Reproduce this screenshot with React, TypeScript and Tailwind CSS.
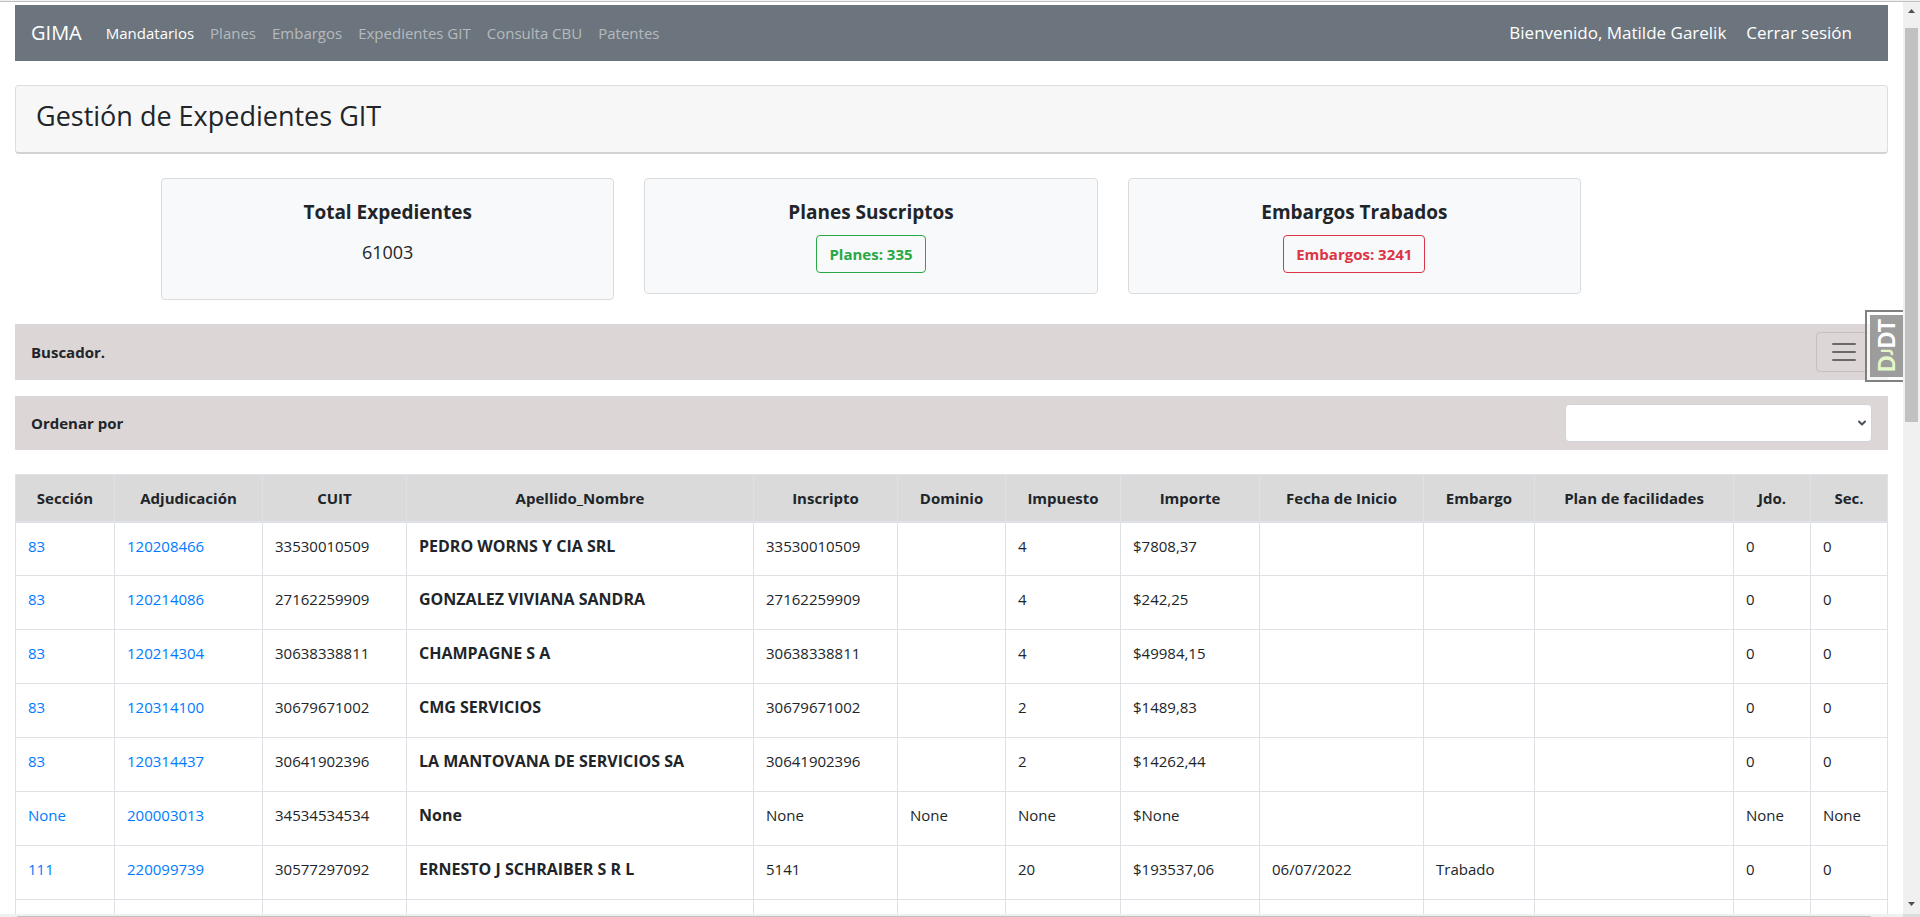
import { ChevronDown } from 'lucide-react'

interface Expediente {
    seccion: string
    adjudicacion: string
    cuit: string
    nombre: string
    inscripto: string
    dominio?: string
    impuesto: string
    importe: string
    fecha?: string
    embargo?: string
    plan?: string
    jdo: string
    sec: string
}

const navLinks = ['Mandatarios', 'Planes', 'Embargos', 'Expedientes GIT', 'Consulta CBU', 'Patentes']

const columns = [
    { label: 'Sección', width: 'w-[99px]' },
    { label: 'Adjudicación', width: 'w-[148px]' },
    { label: 'CUIT', width: 'w-[144px]' },
    { label: 'Apellido_Nombre', width: 'w-[347px]' },
    { label: 'Inscripto', width: 'w-[144px]' },
    { label: 'Dominio', width: 'w-[108px]' },
    { label: 'Impuesto', width: 'w-[115px]' },
    { label: 'Importe', width: 'w-[139px]' },
    { label: 'Fecha de Inicio', width: 'w-[164px]' },
    { label: 'Embargo', width: 'w-[111px]' },
    { label: 'Plan de facilidades', width: 'w-[199px]' },
    { label: 'Jdo.', width: 'w-[77px]' },
    { label: 'Sec.', width: 'w-[77px]' },
]

const expedientes: Expediente[] = [
    { seccion: '83', adjudicacion: '120208466', cuit: '33530010509', nombre: 'PEDRO WORNS Y CIA SRL', inscripto: '33530010509', impuesto: '4', importe: '$7808,37', jdo: '0', sec: '0' },
    { seccion: '83', adjudicacion: '120214086', cuit: '27162259909', nombre: 'GONZALEZ VIVIANA SANDRA', inscripto: '27162259909', impuesto: '4', importe: '$242,25', jdo: '0', sec: '0' },
    { seccion: '83', adjudicacion: '120214304', cuit: '30638338811', nombre: 'CHAMPAGNE S A', inscripto: '30638338811', impuesto: '4', importe: '$49984,15', jdo: '0', sec: '0' },
    { seccion: '83', adjudicacion: '120314100', cuit: '30679671002', nombre: 'CMG SERVICIOS', inscripto: '30679671002', impuesto: '2', importe: '$1489,83', jdo: '0', sec: '0' },
    { seccion: '83', adjudicacion: '120314437', cuit: '30641902396', nombre: 'LA MANTOVANA DE SERVICIOS SA', inscripto: '30641902396', impuesto: '2', importe: '$14262,44', jdo: '0', sec: '0' },
    { seccion: 'None', adjudicacion: '200003013', cuit: '34534534534', nombre: 'None', inscripto: 'None', dominio: 'None', impuesto: 'None', importe: '$None', jdo: 'None', sec: 'None' },
    { seccion: '111', adjudicacion: '220099739', cuit: '30577297092', nombre: 'ERNESTO J SCHRAIBER S R L', inscripto: '5141', impuesto: '20', importe: '$193537,06', fecha: '06/07/2022', embargo: 'Trabado', jdo: '0', sec: '0' },
]

const cell = 'border border-[#dee2e6] px-3 h-[54px] pt-[11px] align-top leading-6'

function Navbar() {
    return (
        <nav className="flex h-14 items-center bg-[#6c757d] px-4">
            <a href="#" className="mr-6 text-[20px] text-white">GIMA</a>
            <ul className="flex gap-4 text-[15px]">
                {navLinks.map((label, i) => (
                    <li key={label}>
                        <a href="#" className={i === 0 ? 'text-white' : 'text-white/50'}>{label}</a>
                    </li>
                ))}
            </ul>
            <div className="ml-auto flex gap-5 pr-5 text-[17px] text-white">
                <span>Bienvenido, Matilde Garelik</span>
                <a href="#">Cerrar sesión</a>
            </div>
        </nav>
    )
}

function Resumen() {
    const card = 'rounded border border-[#d9dbdd] bg-[#f8f9fa] px-5 pt-[21px] text-center'
    return (
        <section className="mt-6 mr-[307px] ml-[146px] grid grid-cols-3 items-start gap-[30px]">
            <div className={`${card} pb-[35px]`}>
                <h2 className="mb-4 text-[19px] leading-6 font-bold">Total Expedientes</h2>
                <p className="text-[18px] leading-6 font-medium">61003</p>
            </div>
            <div className={`${card} pb-5`}>
                <h2 className="mb-[11px] text-[19px] leading-6 font-bold">Planes Suscriptos</h2>
                <button type="button" className="mx-auto block h-[38px] rounded border border-[#28a745] px-3 text-[15px] font-bold text-[#28a745]">Planes: 335</button>
            </div>
            <div className={`${card} pb-5`}>
                <h2 className="mb-[11px] text-[19px] leading-6 font-bold">Embargos Trabados</h2>
                <button type="button" className="mx-auto block h-[38px] rounded border border-[#dc3545] px-3 text-[15px] font-bold text-[#dc3545]">Embargos: 3241</button>
            </div>
        </section>
    )
}

function Tabla() {
    return (
        <table className="mt-6 w-full table-fixed border-collapse border border-[#dee2e6]">
            <colgroup>
                {columns.map((c) => <col key={c.label} className={c.width} />)}
            </colgroup>
            <thead>
                <tr className="bg-[#dadada]">
                    {columns.map((c) => (
                        <th key={c.label} scope="col" className="h-[47px] border border-b-2 border-[#dee2e6] text-center font-bold whitespace-nowrap">{c.label}</th>
                    ))}
                </tr>
            </thead>
            <tbody>
                {expedientes.map((e) => (
                    <tr key={e.adjudicacion}>
                        <td className={cell}><a href="#" className="text-[#007bff]">{e.seccion}</a></td>
                        <td className={cell}><a href="#" className="text-[#007bff]">{e.adjudicacion}</a></td>
                        <td className={cell}>{e.cuit}</td>
                        <td className={`${cell} text-[16px] font-bold whitespace-nowrap`}>{e.nombre}</td>
                        <td className={cell}>{e.inscripto}</td>
                        <td className={cell}>{e.dominio}</td>
                        <td className={cell}>{e.impuesto}</td>
                        <td className={cell}>{e.importe}</td>
                        <td className={cell}>{e.fecha}</td>
                        <td className={cell}>{e.embargo}</td>
                        <td className={cell}>{e.plan}</td>
                        <td className={cell}>{e.jdo}</td>
                        <td className={cell}>{e.sec}</td>
                    </tr>
                ))}
                <tr>
                    {columns.map((c) => <td key={c.label} className={cell}></td>)}
                </tr>
            </tbody>
        </table>
    )
}

export default function App() {
    return (
        <div className="flex h-screen flex-col overflow-hidden bg-white font-['Open_Sans','Noto_Sans',sans-serif] text-[15px] text-[#212529]">
            <div className="h-[2px] shrink-0 border-b border-[#c0c0c0] bg-[#f0f0f0]"></div>
            <div className="relative flex min-h-0 flex-1">
                <main className="min-w-0 flex-1 overflow-hidden px-[15px] pt-[3px]">
                    <Navbar />
                    <header className="mt-6 h-[69px] rounded border border-b-2 border-[#dedede] border-b-[#d2d2d2] bg-[#f7f7f7] px-5 pt-3">
                        <h1 className="text-[27px] leading-9 font-medium">Gestión de Expedientes GIT</h1>
                    </header>
                    <Resumen />
                    <section className="mt-6 flex h-14 items-center justify-between bg-[#dcd6d6] px-4">
                        <strong>Buscador.</strong>
                        <button type="button" aria-label="Mostrar buscador" className="flex h-10 w-14 items-center justify-center rounded border border-black/10">
                            <svg viewBox="0 0 30 30" className="h-[30px] w-[30px]" fill="none" stroke="#6b6867" strokeWidth="2" strokeLinecap="round">
                                <path d="M4 7h22M4 15h22M4 23h22" />
                            </svg>
                        </button>
                    </section>
                    <section className="mt-4 flex items-center justify-between bg-[#dcd6d6] px-4 py-2">
                        <label htmlFor="orden" className="font-bold">Ordenar por</label>
                        <div className="relative">
                            <select id="orden" className="block h-[38px] w-[307px] appearance-none rounded border border-[#ced4da] bg-white px-3">
                                <option></option>
                            </select>
                            <ChevronDown size={12} strokeWidth={4} className="pointer-events-none absolute top-[13px] right-1 text-[#495057]" />
                        </div>
                    </section>
                    <Tabla />
                </main>

                {/* Debug toolbar handle, pinned next to the scrollbar */}
                <button type="button" className="absolute top-[308px] right-[17px] h-[72px] w-[38px] border-2 border-r-0 border-[#555]/75 bg-white/75 py-[3px] pl-[3px]">
                    <span className="flex h-full w-full items-center justify-center bg-[#8c8c8c]/85">
                        <span className="rotate-180 font-[Lato,sans-serif] text-[22px] leading-none font-black text-white [writing-mode:vertical-rl]">
                            <span className="text-[#e4f7c8]">D<span className="text-[16px]">J</span></span>DT
                        </span>
                    </span>
                </button>

                <div className="flex w-[17px] shrink-0 flex-col items-center bg-[#f0f0f0]">
                    <svg viewBox="0 0 7 4" className="mt-[7px] h-1 w-[7px]" fill="#505050"><path d="M0 4L3.500 0L7 4Z" /></svg>
                    <div className="mt-[15px] h-[394px] w-[13px] bg-[#c1c1c1]"></div>
                    <svg viewBox="0 0 7 4" className="mt-auto mb-[8px] h-1 w-[7px]" fill="#505050"><path d="M0 0L3.500 4L7 0Z" /></svg>
                </div>
            </div>
            <div className="flex h-[3px] shrink-0 items-end bg-[#f0f0f0] pl-[17px]">
                <div className="h-px flex-1 bg-[#c1c1c1]"></div>
                <div className="w-8"></div>
                <div className="h-full w-[17px] bg-[#dcdcdc]"></div>
            </div>
        </div>
    )
}
